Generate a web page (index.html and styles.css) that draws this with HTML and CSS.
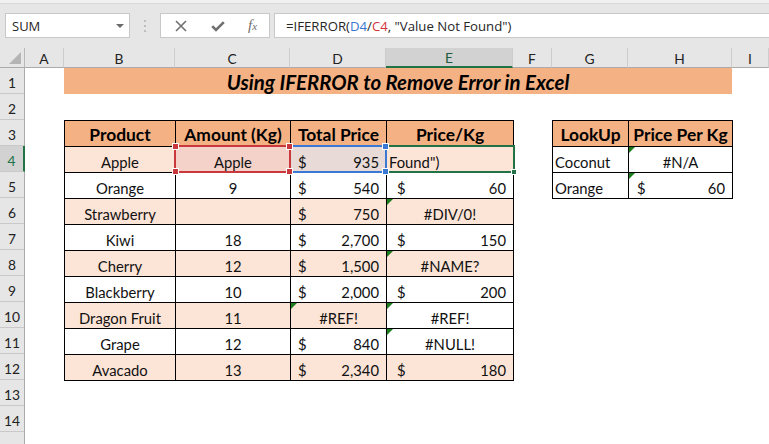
FILE: index.html
```html
<!DOCTYPE html>
<html>
<head>
<meta charset="utf-8">
<link rel="stylesheet" href="styles.css">
</head>
<body>
<div class="top"></div>
<div class="fbar">
  <div class="namebox"><span>SUM</span><span class="caret"></span></div>
  <div class="dots"><svg width="4" height="14" viewBox="0 0 4 14"><circle cx="2" cy="2" r="1.1" fill="#b5b5b5"/><circle cx="2" cy="7" r="1.1" fill="#b5b5b5"/><circle cx="2" cy="12" r="1.1" fill="#b5b5b5"/></svg></div>
  <div class="fbtns">
    <svg class="ic-x" width="12" height="12" viewBox="0 0 12 12"><path d="M1 1L11 11M11 1L1 11" stroke="#707070" stroke-width="1.6" fill="none"/></svg>
    <svg class="ic-ok" width="14" height="11" viewBox="0 0 14 11"><path d="M1.2 5.2L5 9L12.8 1.2" stroke="#707070" stroke-width="2.6" fill="none"/></svg>
    <span class="ic-fx">f<span class="fxx">x</span></span>
  </div>
  <div class="finput">=IFERROR(<span class="rb">D4</span>/<span class="rr">C4</span>, "Value Not Found")</div>
</div>
<div class="sheet">
  <div class="colheads">
    <div class="ch corner"><span class="tri"></span></div>
    <div class="ch wA">A</div>
    <div class="ch wB">B</div>
    <div class="ch wC">C</div>
    <div class="ch wD">D</div>
    <div class="ch wE sel">E</div>
    <div class="ch wF">F</div>
    <div class="ch wG">G</div>
    <div class="ch wH">H</div>
    <div class="ch wI">I</div>
  </div>
  <div class="body">
    <div class="rowheads">
      <div class="rh">1</div><div class="rh">2</div><div class="rh">3</div><div class="rh sel">4</div>
      <div class="rh">5</div><div class="rh">6</div><div class="rh">7</div><div class="rh">8</div>
      <div class="rh">9</div><div class="rh">10</div><div class="rh">11</div><div class="rh">12</div>
      <div class="rh">13</div><div class="rh">14</div><div class="rh"></div>
    </div>
    <div class="cells">
      <div class="title">Using IFERROR to Remove Error in Excel</div>
      <div class="t1">
        <div class="c hd">Product</div><div class="c hd">Amount (Kg)</div><div class="c hd">Total Price</div><div class="c hd">Price/Kg</div>

        <div class="c p">Apple</div>
        <div class="c refc">Apple<span class="box red"><i class="h tl"></i><i class="h tr"></i><i class="h bl"></i><i class="h br"></i></span></div>
        <div class="c acc refd"><span>$</span><span>935</span><span class="box blue"><i class="h tr"></i><i class="h br"></i></span></div>
        <div class="c p edit">Found")<span class="box green"><i class="fill"></i></span></div>

        <div class="c">Orange</div><div class="c">9</div>
        <div class="c acc"><span>$</span><span>540</span></div>
        <div class="c acc e"><span>$</span><span>60</span></div>

        <div class="c p">Strawberry</div><div class="c p"></div>
        <div class="c p acc"><span>$</span><span>750</span></div>
        <div class="c p flag">#DIV/0!</div>

        <div class="c">Kiwi</div><div class="c">18</div>
        <div class="c acc"><span>$</span><span>2,700</span></div>
        <div class="c acc e"><span>$</span><span>150</span></div>

        <div class="c p">Cherry</div><div class="c p">12</div>
        <div class="c p acc"><span>$</span><span>1,500</span></div>
        <div class="c p flag">#NAME?</div>

        <div class="c">Blackberry</div><div class="c">10</div>
        <div class="c acc"><span>$</span><span>2,000</span></div>
        <div class="c acc e"><span>$</span><span>200</span></div>

        <div class="c p">Dragon Fruit</div><div class="c p">11</div>
        <div class="c p flag">#REF!</div>
        <div class="c flag">#REF!</div>

        <div class="c">Grape</div><div class="c">12</div>
        <div class="c acc"><span>$</span><span>840</span></div>
        <div class="c flag">#NULL!</div>

        <div class="c p">Avacado</div><div class="c p">13</div>
        <div class="c p acc"><span>$</span><span>2,340</span></div>
        <div class="c p acc e"><span>$</span><span>180</span></div>
      </div>
      <div class="t2">
        <div class="c hd">LookUp</div><div class="c hd">Price Per Kg</div>
        <div class="c left">Coconut</div><div class="c flag">#N/A</div>
        <div class="c left">Orange</div><div class="c acc h2 flag"><span>$</span><span>60</span></div>
      </div>
    </div>
  </div>
</div>
</body>
</html>
```
FILE: styles.css
```css
* { box-sizing: border-box; margin: 0; padding: 0; }
body {
  margin: 0;
  width: 769px;
  height: 444px;
  overflow: hidden;
  background: #e6e6e6;
  font-family: Lato, "Liberation Sans", sans-serif;
}
.top { height: 4px; background: #f1f1f1; border-bottom: 1px solid #d9d9d9; }
.fbar {
  height: 44px;
  display: flex;
  align-items: flex-start;
  padding: 9px 0 0 5px;
  font-family: "Open Sans", "Noto Sans", sans-serif;
}
.namebox {
  width: 125px;
  height: 25px;
  background: #fff;
  border: 1px solid #c8c8c8;
  display: flex;
  align-items: center;
  justify-content: space-between;
  padding: 0 5px 0 6px;
  font-size: 13px;
  color: #262626;
}
.caret {
  width: 0; height: 0;
  border-left: 4px solid transparent;
  border-right: 4px solid transparent;
  border-top: 4px solid #6a6a6a;
}
.dots {
  width: 30px;
  height: 25px;
  display: flex;
  align-items: center;
  justify-content: center;
}
.fbtns {
  width: 110px;
  height: 25px;
  background: #fff;
  border: 1px solid #c8c8c8;
  display: flex;
  align-items: center;
  padding-left: 14px;
}
.ic-x { margin-right: 24px; }
.ic-ok { margin-right: 23px; margin-top: 2px; }
.ic-fx {
  font-family: "Liberation Serif", "DejaVu Serif", serif;
  font-style: italic;
  font-size: 15px;
  color: #707070;
}
.fxx { font-size: 11px; }
.finput {
  flex: 1;
  margin-left: 4px;
  height: 25px;
  background: #fff;
  border: 1px solid #c8c8c8;
  border-right: none;
  display: flex;
  align-items: center;
  padding-left: 11px;
  font-size: 13.2px;
  color: #262626;
  white-space: pre;
}
.rb { color: #3a76d0; }
.rr { color: #d2343b; }

.sheet { display: flex; flex-direction: column; }
.colheads { display: flex; height: 20px; }
.ch {
  height: 20px;
  border-right: 1px solid #cdcdcd;
  border-bottom: 1px solid #ababab;
  display: flex;
  align-items: center;
  justify-content: center;
  font-size: 13.8px;
  color: #222;
  flex: none;
  padding-top: 1px;
}
.corner { width: 25px; position: relative; border-right: 1px solid #b8b8b8; }
.tri {
  position: absolute;
  right: 3px; bottom: 3px;
  width: 0; height: 0;
  border-left: 12px solid transparent;
  border-bottom: 12px solid #b4b4b4;
}
.wA { width: 39px; }
.wB { width: 111px; }
.wC { width: 115px; }
.wD { width: 96px; }
.wE { width: 127px; }
.wF { width: 39px; }
.wG { width: 76px; }
.wH { width: 104px; }
.wI { flex: 1; }
.ch.sel { background: #d2d2d2; border-bottom: 2px solid #217346; color: #1f5c3b; }

.body { display: flex; background: #fff; height: 376px; overflow: hidden; }
.rowheads { width: 25px; flex: none; background: #e6e6e6; border-right: 1px solid #ababab; }
.rh {
  height: 26px;
  border-bottom: 1px solid #c9c9c9;
  display: flex;
  align-items: center;
  justify-content: center;
  font-size: 13.8px;
  color: #222;
  padding-top: 3px;
}
.rh.sel { background: #d2d2d2; color: #217346; border-right: 2px solid #217346; margin-right: -1px; }

.cells {
  display: grid;
  grid-template-columns: 39px 111px 115px 96px 127px 39px 76px 104px 1fr;
  grid-template-rows: repeat(15, 26px);
  flex: 1;
}
.title {
  grid-area: 1 / 2 / 2 / 9;
  background: #f4b183;
  display: flex;
  align-items: center;
  justify-content: center;
  font-weight: 700;
  font-style: italic;
  font-size: 20.4px;
  color: #000;
  padding-top: 1px;
}
.t1, .t2 {
  display: grid;
  grid-template-rows: repeat(10, 26px);
  border-left: 1px solid #000;
  border-top: 1px solid #000;
  align-self: start;
  justify-self: start;
}
.t1 { grid-area: 3 / 2 / 13 / 6; grid-template-columns: 111px 115px 96px 127px; width: 450px; }
.t2 { grid-area: 3 / 7 / 6 / 9; grid-template-columns: 76px 104px; grid-template-rows: repeat(3, 26px); width: 181px; }

.c {
  position: relative;
  height: 26px;
  border-right: 1px solid #000;
  border-bottom: 1px solid #000;
  display: flex;
  align-items: center;
  justify-content: center;
  font-size: 14.8px;
  color: #111;
  padding-top: 4px;
  white-space: nowrap;
  background: #fff;
}
.c.p { background: #fce4d6; }
.c.hd { background: #f4b183; font-weight: 700; font-size: 17.4px; color: #000; padding-top: 2px; }
.c.left { justify-content: flex-start; padding-left: 2px; }
.c.acc { justify-content: space-between; padding-left: 7px; padding-right: 7px; }
.c.acc.e { padding-left: 10px; }
.c.acc.h2 { padding-left: 8px; }
.c.flag::before {
  content: "";
  position: absolute;
  top: 0; left: 0;
  width: 0; height: 0;
  border-top: 6px solid #1d7d1d;
  border-right: 6px solid transparent;
}
.c.refc { background: #f4d2c9; }
.c.refd { background: #e8dbd7; }
.c.edit { justify-content: flex-start; padding-left: 2px; }

.box {
  position: absolute;
  top: -2px; left: -2px; right: -1px; bottom: -1px;
  border: 2px solid;
  pointer-events: none;
}
.box.red { border-color: #c8383d; z-index: 3; }
.box.blue { border-color: #3b78d4; z-index: 2; }
.box.green { border-color: #217346; z-index: 1; right: -2px; }
.h {
  position: absolute;
  width: 7px; height: 7px;
  border: 1px solid #fff;
}
.red .h { background: #c8383d; }
.blue .h { background: #3b78d4; }
.h.tl { top: -4px; left: -4px; }
.h.tr { top: -4px; right: -4px; }
.h.bl { bottom: -4px; left: -4px; }
.h.br { bottom: -4px; right: -4px; }
.fill {
  position: absolute;
  right: -4px; bottom: -4px;
  width: 6px; height: 6px;
  background: #217346;
  border: 1px solid #fff;
}
```
